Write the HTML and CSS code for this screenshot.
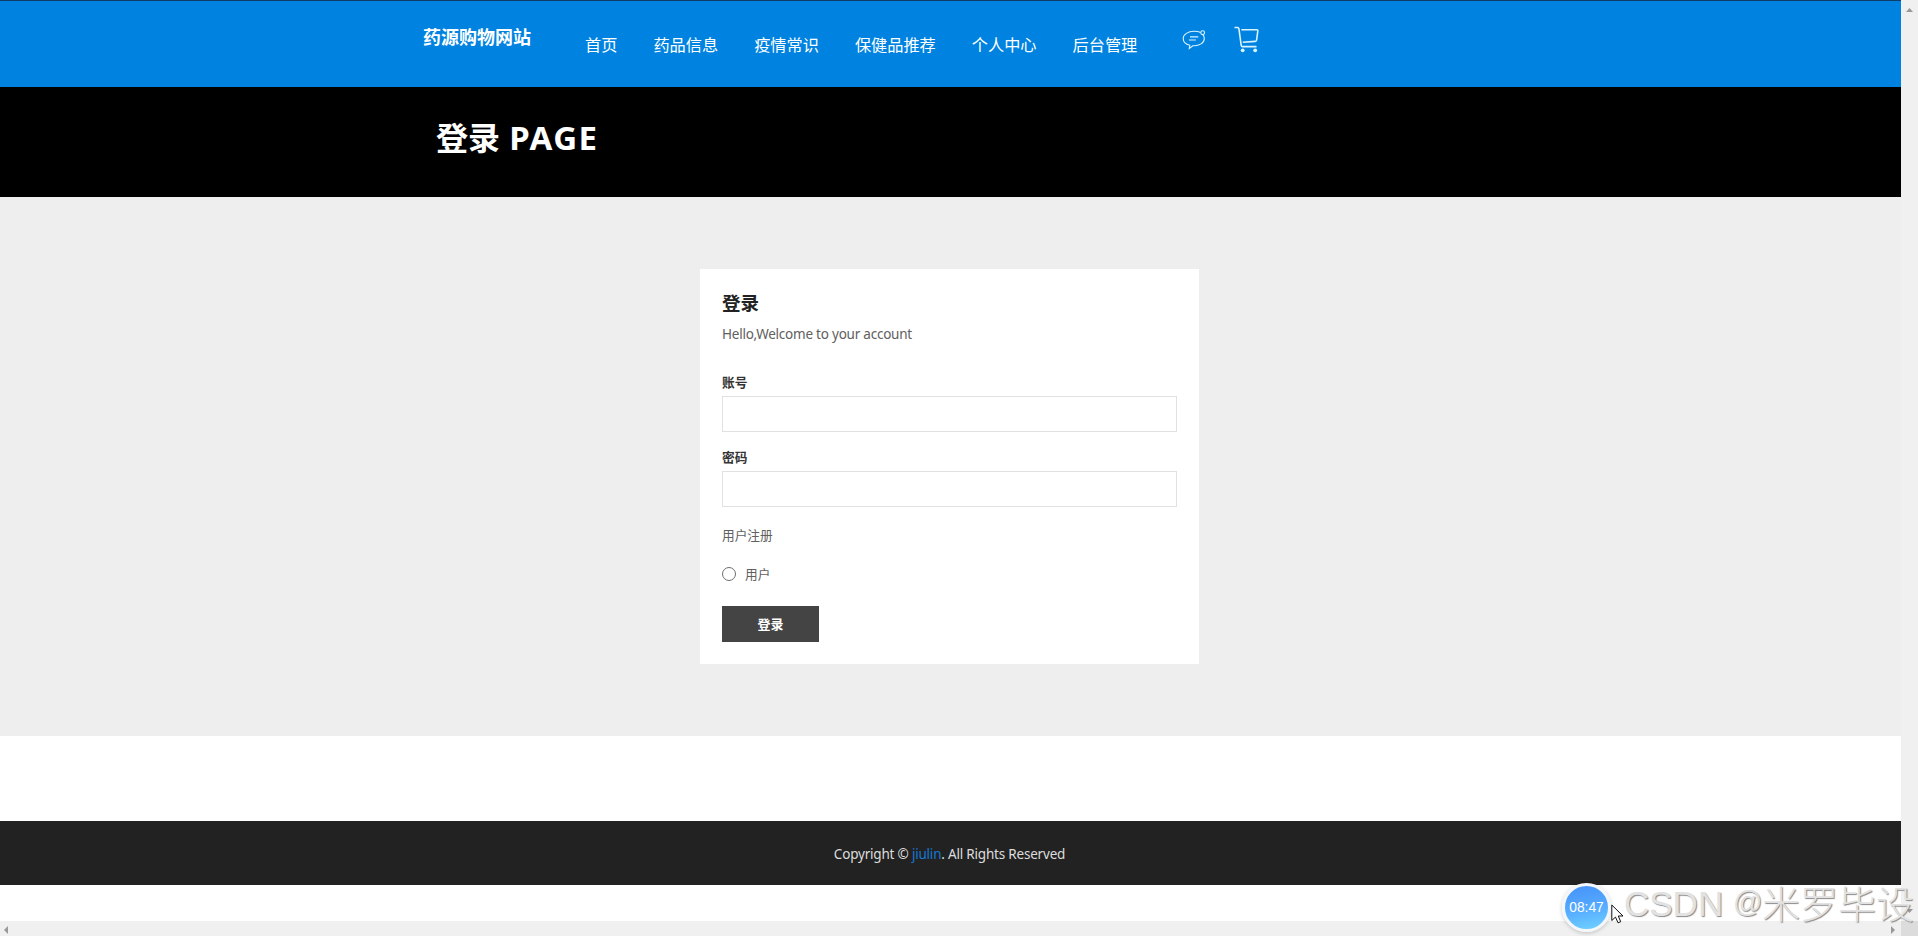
FILE: index.html
```html
<!doctype html>
<html lang="zh">
<head>
    <meta charset="utf-8">
	<title>药源购物网站</title>
	<link rel="stylesheet" href="styles.css">
</head>
<body>
    <div class="window">
	    <div class="page">
		    <header class="header">
			    <a class="logo">药源购物网站</a>
				<ul class="nav">
				    <li>首页</li>
				    <li>药品信息</li>
				    <li>疫情常识</li>
				    <li>保健品推荐</li>
				    <li>个人中心</li>
				    <li>后台管理</li>
				</ul>
				<svg class="chat" width="24" height="20" viewBox="0 0 24 20">
				    <path d="M18.6 2.6C16.800 1.700 14.500 1.300 12 1.300C6 1.300 1.200 4.400 1.200 8.400C1.200 11.700 4 14.200 7.800 15.300L7.300 18.500L10.800 15.700C17.500 16.200 22.300 12.800 22.300 8.400C22.300 7.100 21.800 5.900 21 4.900"/>
					<circle cx="20.700" cy="2.700" r="1.900"/>
					<path d="M8 6.900h8.300M6.900 10h7"/>
				</svg>
				<svg class="cart" width="26" height="27" viewBox="0 0 26 27">
				    <path d="M.5 1.500H3.600Q4.600 1.500 4.900 2.700L7.200 19.300Q7.400 20.600 8.600 20.600H22.500M7.300 3.800H22.800Q24 3.800 23.800 5L22.600 14.200Q22.400 15.300 21.200 15.400L8.800 16.200"/>
					<circle class="wheel" cx="8.700" cy="24.300" r="1.900"/>
					<circle class="wheel" cx="21.200" cy="24.300" r="1.900"/>
				</svg>
			</header>
			<div class="banner"><h1>登录 <span>PAGE</span></h1></div>
			<div class="main">
			    <form class="login">
				    <h2>登录</h2>
					<p class="hello">Hello,Welcome to your account</p>
					<label for="user">账号</label>
					<input class="text" type="text" id="user">
					<label for="pwd">密码</label>
					<input class="text" type="password" id="pwd">
					<a class="reg">用户注册</a>
					<div class="role"><input type="radio" id="role"><span>用户</span></div>
					<button type="button">登录</button>
				</form>
			</div>
			<footer class="footer"><p>Copyright © <a>jiulin</a>. All Rights Reserved</p></footer>
		</div>
		<div class="scroll-y">
		    <svg width="7" height="4"><path d="M0 4L3.500 0L7 4z"/></svg>
		    <svg width="7" height="4"><path d="M0 0h7L3.500 4z"/></svg>
		</div>
		<div class="scroll-x">
		    <svg width="4" height="8"><path d="M4 0v8L0 4z"/></svg>
		    <svg width="4" height="8"><path d="M0 0v8l4-4z"/></svg>
		</div>
		<div class="corner"></div>
	</div>

	<!-- 悬浮时钟 -->
	<div class="clock">08:47</div>
	<svg class="cursor" width="13" height="20" viewBox="0 0 13 20">
	    <path d="M.8 1V16.500L4.500 13.100L7 18.800L9.700 17.700L7.300 12H12z"/>
	</svg>
	<div class="mark"><span>CSDN</span><span class="at">@</span>米罗毕设</div>
</body>
</html>
```
FILE: styles.css
```css
*{
	margin: 0;
	padding: 0;
	box-sizing: border-box;
	list-style: none;
}
body{
	height: 936px;
	overflow: hidden;
	background: #fff;
	color: #606060;
	font-family: "Noto Sans", "Noto Sans CJK SC", sans-serif;
	font-size: 13px;
}
.window{
	display: grid;
	grid-template-columns: 1901px 17px;
	grid-template-rows: 921px 15px;
}
.header{
	display: flex;
	align-items: flex-start;
	height: 87px;
	padding-left: 423px;
	border-top: 1px solid #103c69;
	background: #0083e0;
	color: #fff;
}
.logo{
	width: 162px;
	margin-top: 23px;
	font-size: 18px;
	font-weight: bold;
	line-height: 26px;
}
.nav{
	display: flex;
	gap: 36px;
	margin-top: 32px;
	font-size: 16.2px;
	line-height: 24px;
}
.header svg{
	fill: none;
	stroke: #d8f4ff;
}
.chat{
	margin: 29px 0 0 45px;
	stroke-width: 1.1;
}
.cart{
	margin: 25px 0 0 28px;
	stroke-width: 1.6;
}
.header .wheel{
	fill: #d8f4ff;
	stroke: none;
}
.banner{
	height: 110px;
	padding: 29px 0 0 436px;
	background: #000;
	color: #fff;
}
.banner h1{
	font-size: 32px;
	line-height: 44px;
}
.banner span{
	margin-left: 1px;
	font-size: 33px;
	letter-spacing: 1.4px;
}
.main{
	height: 539px;
	padding: 72px 2px 0 0;
	background: #eee;
}
.login{
	width: 499px;
	height: 395px;
	margin: 0 auto;
	padding: 20px 22px 22px;
	background: #fff;
}
.login h2{
	color: #222;
	font-size: 18.500px;
	line-height: 27px;
}
.hello{
	margin: 8px 0 28px;
	font-size: 13.500px;
	letter-spacing: -.23px;
	line-height: 20px;
}
.login label{
	display: block;
	height: 24px;
	color: #333;
	font-size: 12.700px;
	font-weight: bold;
	line-height: 20px;
}
.login .text{
	display: block;
	width: 455px;
	height: 36px;
	margin-bottom: 15px;
	border: 1px solid #e1e1e1;
}
.reg{
	display: block;
	margin-top: 18px;
	font-size: 12.700px;
	line-height: 20px;
}
.role{
	display: flex;
	align-items: center;
	gap: 9px;
	height: 20px;
	margin: 19px 0 22px;
	font-size: 12.700px;
}
.role span{
	padding-bottom: 2px;
}
.role input{
	appearance: none;
	width: 14px;
	height: 14px;
	border: 1px solid #6d6d6d;
	border-radius: 50%;
}
.login button{
	display: block;
	width: 97px;
	height: 36px;
	padding-bottom: 2px;
	border: 0;
	background: #444;
	color: #fff;
	font: bold 13px "Noto Sans CJK SC", sans-serif;
}
.footer{
	height: 64px;
	margin-top: 85px;
	padding-right: 2px;
	background: #222;
	color: #ddd;
	font-size: 13.500px;
	letter-spacing: -.2px;
	line-height: 66px;
	text-align: center;
}
.footer a{
	color: #1479d6;
}
.scroll-y{
	display: flex;
	flex-direction: column;
	justify-content: space-between;
	align-items: center;
	padding: 8px 0;
	background: #f0f0f0;
}
.scroll-x{
	display: flex;
	justify-content: space-between;
	align-items: center;
	padding: 3px 6px 0 4px;
	background: #f0f0f0;
}
.scroll-y svg, .scroll-x svg{
	fill: #999;
}
.corner{
	background: #dcdcdc;
}
.clock{
	position: absolute;
	left: 1562px;
	top: 883px;
	width: 49px;
	height: 49px;
	border: 3px solid #f4f8fc;
	border-radius: 50%;
	background: linear-gradient(170deg, #4592f8, #55aaff 50%, #70d2ff);
	box-shadow: 0 1px 4px rgba(0,0,0,.2);
	color: #fff;
	font: 13.800px/44px "Liberation Sans", sans-serif;
	text-align: center;
}
.cursor{
	position: absolute;
	left: 1611px;
	top: 904px;
	fill: #fff;
	stroke: #111;
}
.mark{
	position: absolute;
	left: 1624px;
	top: 878px;
	display: flex;
	color: #e2e2e2;
	font: 300 38px/48px "Noto Sans CJK SC", sans-serif;
	text-shadow: 1px 1px 1px #888;
	white-space: nowrap;
}
.mark span{
	width: 109px;
	padding-top: 2px;
	font-family: "Liberation Sans", sans-serif;
	font-size: 35px;
}
.mark .at{
	width: 29px;
	padding-top: 0;
	font-size: 29px;
}
```
